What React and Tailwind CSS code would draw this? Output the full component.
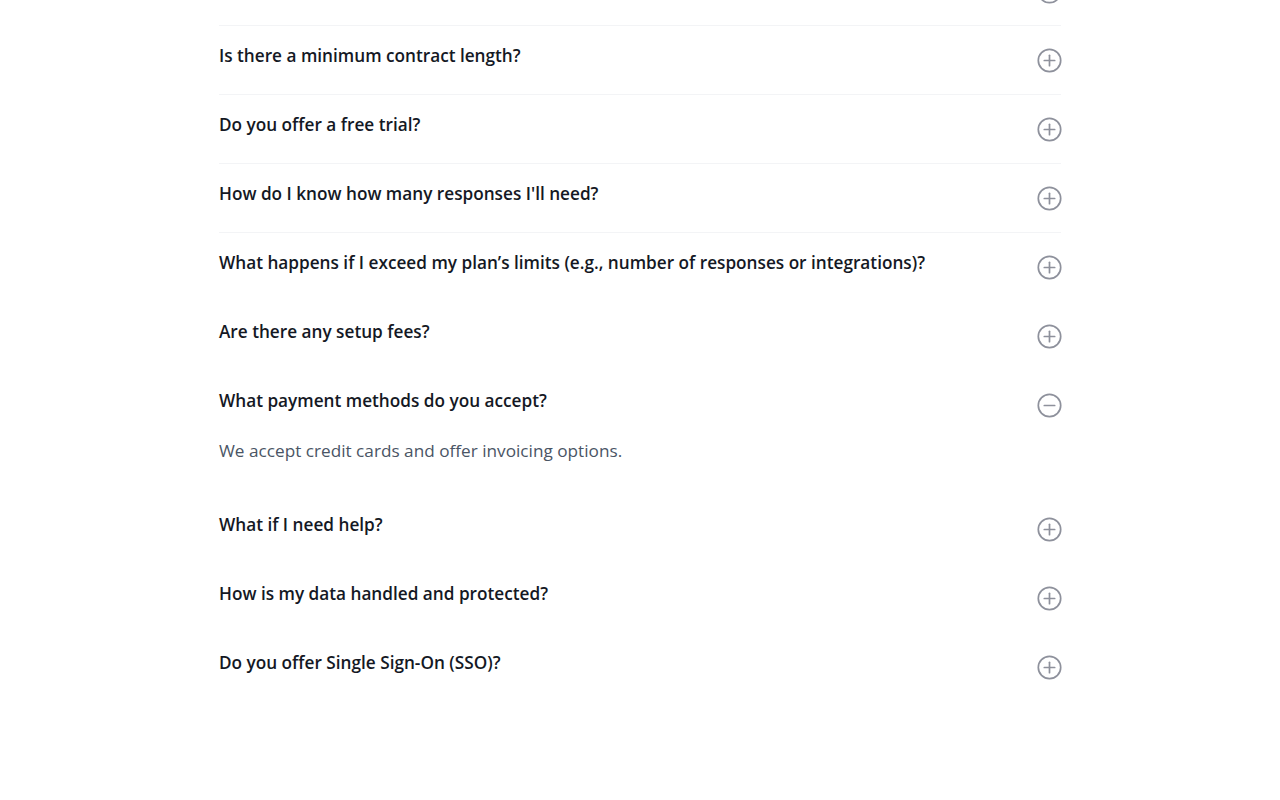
import { useState } from "react";

const faqs = [
  {
    q: "Can I change my plan at any time?",
    a: "Yes, you can upgrade or downgrade your plan whenever you need.",
  },
  { q: "Is there a minimum contract length?", a: "No, plans are billed monthly or annually." },
  { q: "Do you offer a free trial?", a: "Yes, you can try the platform for free." },
  { q: "How do I know how many responses I'll need?", a: "Start small and scale as you grow." },
  {
    q: "What happens if I exceed my plan’s limits (e.g., number of responses or integrations)?",
    a: "We'll reach out to help you pick a plan that fits.",
  },
  { q: "Are there any setup fees?", a: "No, there are no setup fees." },
  { q: "What payment methods do you accept?", a: "We accept credit cards and offer invoicing options." },
  { q: "What if I need help?", a: "Our support team is here to help." },
  { q: "How is my data handled and protected?", a: "Your data is encrypted in transit and at rest." },
  { q: "Do you offer Single Sign-On (SSO)?", a: "SSO is available on enterprise plans." },
];

function ToggleIcon({ open }) {
  return (
    <svg width="25" height="25" viewBox="0 0 25 25" fill="none" stroke="#8e919c" strokeWidth="1.7" strokeLinecap="round">
      <circle cx="12.5" cy="12.5" r="11.2" />
      <line x1="7.3" y1="12.5" x2="17.7" y2="12.5" />
      {!open && <line x1="12.5" y1="7.3" x2="12.5" y2="17.7" />}
    </svg>
  );
}

export default function App() {
  const [openIndex, setOpenIndex] = useState(6);

  return (
    <div className="min-h-[800px] bg-white overflow-hidden" style={{ fontFamily: "'Open Sans', sans-serif" }}>
      <div className="w-[842px] mx-auto -mt-[43px]">
        {faqs.map((item, i) => {
          const open = openIndex === i;
          return (
            <div key={i} className={i < 4 ? "border-b border-gray-100" : "border-b border-transparent"}>
              <button
                type="button"
                onClick={() => setOpenIndex(open ? null : i)}
                className="w-full flex items-start justify-between text-left pt-[18px] pb-[21px]"
              >
                <span className="text-[17.2px] leading-6 font-semibold text-[#141824]">{item.q}</span>
                <span className="ml-6 mt-[4px] mr-[-1px] shrink-0">
                  <ToggleIcon open={open} />
                </span>
              </button>
              {open && (
                <p className="text-[17.2px] leading-6 text-gray-600 pb-[31px]">{item.a}</p>
              )}
            </div>
          );
        })}
      </div>
    </div>
  );
}
